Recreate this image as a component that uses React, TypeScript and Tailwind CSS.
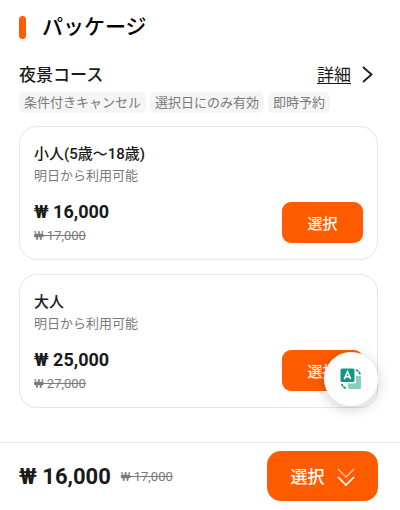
import React from "react";

type Plan = { id: string; name: string; note: string; price: string; was: string };

const plans: Plan[] = [
  { id: "child", name: "小人(5歳～18歳)", note: "明日から利用可能", price: "₩ 16,000", was: "₩ 17,000" },
  { id: "adult", name: "大人", note: "明日から利用可能", price: "₩ 25,000", was: "₩ 27,000" },
];

const tags = ["条件付きキャンセル", "選択日にのみ有効", "即時予約"];

function PlanCard({ plan }: { plan: Plan }) {
  return (
    <li className="flex items-end justify-between rounded-[18px] border border-[#e6e6e6] px-3.5 pt-[15px] pb-[11px]">
      <div>
        <h3 className="text-[15px] leading-6 font-medium text-[#1a1a1a]">{plan.name}</h3>
        <p className="text-[13px] leading-5 text-[#7a7a7a]">{plan.note}</p>
        <p className="mt-3.5 text-[18px] leading-6 font-bold text-[#1a1a1a]">{plan.price}</p>
        <p className="text-[13px] leading-6 text-[#7a7a7a]">
          <s>{plan.was}</s>
        </p>
      </div>
      <button
        type="button"
        aria-label={`${plan.name} 選択`}
        className="mb-[5px] h-[41px] w-[81px] rounded-[9px] bg-[#ff5b00] pt-1 text-[15px] font-medium text-white"
      >
        選択
      </button>
    </li>
  );
}

function TranslateIcon() {
  return (
    <svg width="22" height="22" viewBox="0 0 22 22" fill="none" aria-hidden="true">
      <path d="M16 8h3.7a1.3 1.3 0 0 1 1.3 1.3v10.4a1.3 1.3 0 0 1-1.3 1.3H9.3A1.3 1.3 0 0 1 8 19.7V15.5h6.5a1.5 1.5 0 0 0 1.5-1.5z" fill="#86cfc0" />
      <rect x="0.5" y="0.5" width="14" height="13.5" rx="1.5" fill="#129781" />
      <path d="M4.3 11.3 7.5 3.5 10.7 11.3M5.4 8.8h4.2" stroke="#fff" strokeWidth="1.6" />
      <path d="M15.8 2.2c2 .3 3.7 1.8 4.2 4.2M1.8 15.8c.4 2.4 2 4 4.4 4.4" stroke="#129781" strokeWidth="1.8" strokeDasharray="2.7 0.8" />
    </svg>
  );
}

export default function App() {
  return (
    <div className="flex min-h-screen flex-col bg-white font-[Roboto,'Noto_Sans_CJK_JP',sans-serif]" lang="ja">
      <main className="flex-1 pt-3 pr-[22px] pb-8 pl-[19px]">
        <h1 className="flex items-center gap-4 text-[21px] leading-[30px] font-medium text-black">
          <span className="h-[23px] w-[7px] rounded-full bg-[#ff5b00]" />
          パッケージ
        </h1>

        <div className="mt-[21px] flex items-center justify-between pr-1">
          <h2 className="text-[17px] leading-6 font-medium text-[#1a1a1a]">夜景コース</h2>
          <a href="#details" className="flex items-center gap-2.5 text-[17px] leading-6 text-[#1a1a1a]">
            <span className="underline underline-offset-2">詳細</span>
            <svg width="13" height="18" viewBox="0 0 13 18" fill="none" stroke="currentColor" strokeWidth="1.8" aria-hidden="true">
              <path d="M2 1 10.5 8.5 2 16" />
            </svg>
          </a>
        </div>

        <ul className="mt-[5px] flex flex-wrap gap-1">
          {tags.map((tag) => (
            <li key={tag} className="rounded-md bg-[#f5f5f5] px-[5px] text-[13px] leading-[21px] text-[#7a7a7a]">
              {tag}
            </li>
          ))}
        </ul>

        <ul className="mt-[13px] flex flex-col gap-3.5">
          {plans.map((plan) => (
            <PlanCard key={plan.id} plan={plan} />
          ))}
        </ul>
      </main>

      <button
        type="button"
        aria-label="翻訳"
        className="fixed right-[22px] bottom-[104px] flex size-[54px] items-center justify-center rounded-full bg-white shadow-[0_3px_14px_rgba(0,0,0,0.2)]"
      >
        <TranslateIcon />
      </button>

      <footer className="sticky bottom-0 flex items-center justify-between border-t border-[#e6e6e6] bg-white pt-2 pr-[22px] pb-[9px] pl-[19px]">
        <p className="flex items-center gap-2.5 pt-0.5">
          <strong className="text-[22px] leading-7 font-bold text-[#1a1a1a]">₩ 16,000</strong>
          <s className="text-[13px] leading-5 text-[#7a7a7a]">₩ 17,000</s>
        </p>
        <button
          type="button"
          className="flex h-[50px] w-[111px] items-center justify-center gap-3 rounded-[14px] bg-[#ff5b00] pt-1 text-[17px] font-medium text-white"
        >
          選択
          <svg width="18" height="20" viewBox="0 0 18 20" fill="none" stroke="currentColor" strokeWidth="1.6" aria-hidden="true">
            <path d="m1 1 8 8 8-8" opacity="0.55" />
            <path d="m1 9 8 8 8-8" />
          </svg>
        </button>
      </footer>
    </div>
  );
}
